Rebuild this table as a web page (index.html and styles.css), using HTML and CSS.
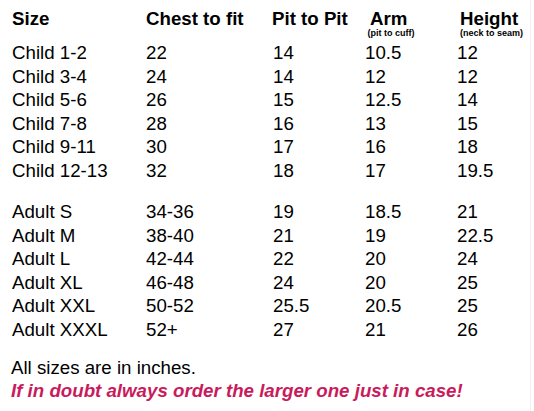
FILE: index.html
```html
<!DOCTYPE html>
<html>
<head>
<meta charset="utf-8">
<link rel="stylesheet" href="styles.css">
</head>
<body>
<div class="sheet">
  <div class="row head">
    <div>Size</div>
    <div>Chest to fit</div>
    <div class="pit">Pit to Pit</div>
    <div class="arm">Arm<span class="sub">(pit to cuff)</span></div>
    <div class="ht">Height<span class="sub">(neck to seam)</span></div>
  </div>
  <div class="group">
    <div class="row"><div>Child 1-2</div><div>22</div><div>14</div><div>10.5</div><div>12</div></div>
    <div class="row"><div>Child 3-4</div><div>24</div><div>14</div><div>12</div><div>12</div></div>
    <div class="row"><div>Child 5-6</div><div>26</div><div>15</div><div>12.5</div><div>14</div></div>
    <div class="row"><div>Child 7-8</div><div>28</div><div>16</div><div>13</div><div>15</div></div>
    <div class="row"><div>Child 9-11</div><div>30</div><div>17</div><div>16</div><div>18</div></div>
    <div class="row"><div>Child 12-13</div><div>32</div><div>18</div><div>17</div><div>19.5</div></div>
  </div>
  <div class="group adult">
    <div class="row"><div>Adult S</div><div>34-36</div><div>19</div><div>18.5</div><div>21</div></div>
    <div class="row"><div>Adult M</div><div>38-40</div><div>21</div><div>19</div><div>22.5</div></div>
    <div class="row"><div>Adult L</div><div>42-44</div><div>22</div><div>20</div><div>24</div></div>
    <div class="row"><div>Adult XL</div><div>46-48</div><div>24</div><div>20</div><div>25</div></div>
    <div class="row"><div>Adult XXL</div><div>50-52</div><div>25.5</div><div>20.5</div><div>25</div></div>
    <div class="row"><div>Adult XXXL</div><div>52+</div><div>27</div><div>21</div><div>26</div></div>
  </div>
  <p class="note">All sizes are in inches.</p>
  <p class="warn">If in doubt always order the larger one just in case!</p>
</div>
</body>
</html>
```

FILE: styles.css
```css
html, body {
  margin: 0;
  padding: 0;
  background: #ffffff;
}

body {
  font-family: "Liberation Sans", Arial, sans-serif;
  color: #000000;
}

.sheet {
  width: 531px;
  height: 411px;
  box-sizing: border-box;
  border-right: 1px solid #f2f2f2;
  padding: 8px 0 0 12px;
}

.row {
  display: grid;
  grid-template-columns: 134px 127px 92px 92px 1fr;
  font-size: 18.7px;
  line-height: 23.5px;
}

.head {
  font-weight: bold;
  line-height: 22px;
  height: 33px;
}

.head .pit {
  margin-left: -1px;
}

.head .arm {
  padding-left: 5px;
}

.head .arm .sub {
  margin-left: -2.5px;
}

.head .ht {
  padding-left: 3px;
}

.sub {
  display: block;
  font-size: 9px;
  line-height: 12px;
  margin-top: -3px;
  font-weight: bold;
}

.adult {
  margin-top: 18px;
}

.note,
.warn {
  margin: 0;
  font-size: 18.7px;
  line-height: 23.3px;
}

.note {
  margin-top: 15px;
  margin-left: -1px;
}

.warn {
  margin-left: -1px;
  font-weight: bold;
  font-style: italic;
  color: #c91b5c;
}
```
